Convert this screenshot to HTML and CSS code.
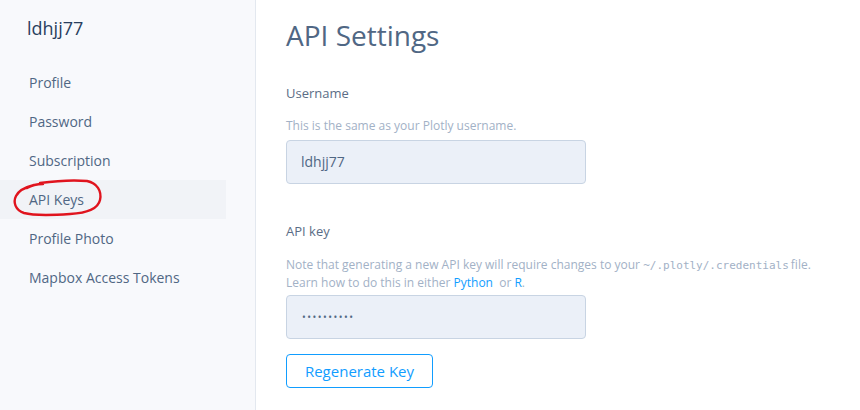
FILE: index.html
```html
<!DOCTYPE html>
<html>
<head>
<meta charset="utf-8">
<link rel="stylesheet" href="styles.css">
</head>
<body>
<div class="layout">
  <aside class="sidebar">
    <div class="user">ldhjj77</div>
    <nav class="nav">
      <a class="nav-item">Profile</a>
      <a class="nav-item">Password</a>
      <a class="nav-item">Subscription</a>
      <a class="nav-item active">API Keys
        <svg class="circle" width="100" height="46" viewBox="0 0 100 46">
          <path d="M17 12 C22 9 28 8 33 8 L30 7 C45 5 65 4 77 5 C87 7 92 15 90 24 C88 33 78 37 60 38 C45 39 25 40 14 37 C5 34 3 26 6 20 C9 14 16 11 24 9" fill="none" stroke="#e0141e" stroke-width="2.4" stroke-linecap="round" stroke-linejoin="round"/>
        </svg>
      </a>
      <a class="nav-item">Profile Photo</a>
      <a class="nav-item">Mapbox Access Tokens</a>
    </nav>
  </aside>
  <main class="main">
    <h1 class="title">API Settings</h1>
    <section class="field">
      <label class="label">Username</label>
      <p class="help">This is the same as your Plotly username.</p>
      <div class="input">ldhjj77</div>
    </section>
    <section class="field key">
      <label class="label">API key</label>
      <p class="help">Note that generating a new API key will require changes to your <code>~/.plotly/.credentials</code>file.<br>Learn how to do this in either <a class="link">Python</a>&nbsp; or <a class="link">R</a>.</p>
      <div class="input dots">••••••••••</div>
      <button class="btn">Regenerate Key</button>
    </section>
  </main>
</div>
</body>
</html>
```

FILE: styles.css
```css
* { box-sizing: border-box; }
html, body { margin: 0; padding: 0; }
body {
  font-family: "Open Sans", "Noto Sans", sans-serif;
  color: #506784;
  background: #fff;
  width: 860px;
  height: 410px;
  overflow: hidden;
}
.layout {
  display: flex;
  height: 410px;
}
.sidebar {
  width: 256px;
  flex: none;
  background: #f8f9fc;
  border-right: 1px solid #e3e8ef;
  padding-top: 14px;
}
.user {
  font-size: 18px;
  color: #2a3f5f;
  padding-left: 27px;
  line-height: 28px;
}
.nav {
  margin-top: 21px;
  display: flex;
  flex-direction: column;
  width: 226px;
}
.nav-item {
  position: relative;
  display: block;
  font-size: 14px;
  line-height: 39px;
  padding-left: 29px;
  color: #506784;
}
.nav-item.active {
  background: #f1f3f7;
}
.circle {
  position: absolute;
  left: 10px;
  top: -4px;
}
.main {
  padding-left: 30px;
  padding-top: 14px;
}
.title {
  margin: 0;
  font-weight: 400;
  font-size: 28px;
  line-height: 42px;
  color: #506784;
}
.field {
  margin-top: 27px;
}
.field.key { margin-top: 37px; }
.label {
  display: block;
  font-size: 13px;
  line-height: 20px;
  color: #5b6d86;
}
.help {
  margin: 14px 0 6px;
  font-size: 12px;
  line-height: 17px;
  color: #a2b1c6;
}
.key .help { margin-top: 15px; margin-bottom: 4px; }
.help code {
  font-family: "DejaVu Sans Mono", monospace;
  font-size: 11px;
  margin-right: 2px;
}
.link { color: #119dff; }
.input {
  width: 300px;
  height: 44px;
  background: #ebf0f8;
  border: 1px solid #c8d4e3;
  border-radius: 4px;
  padding: 0 14px;
  font-size: 14px;
  line-height: 42px;
  color: #506784;
}
.input.dots {
  font-size: 10px;
  letter-spacing: 1.5px;
  padding-left: 15px;
  color: #506784;
}
.btn {
  margin-top: 15px;
  width: 147px;
  height: 34px;
  border: 1px solid #119dff;
  border-radius: 4px;
  background: #fff;
  color: #119dff;
  font-family: "Open Sans", sans-serif;
  font-size: 15px;
  padding: 0;
}
```
